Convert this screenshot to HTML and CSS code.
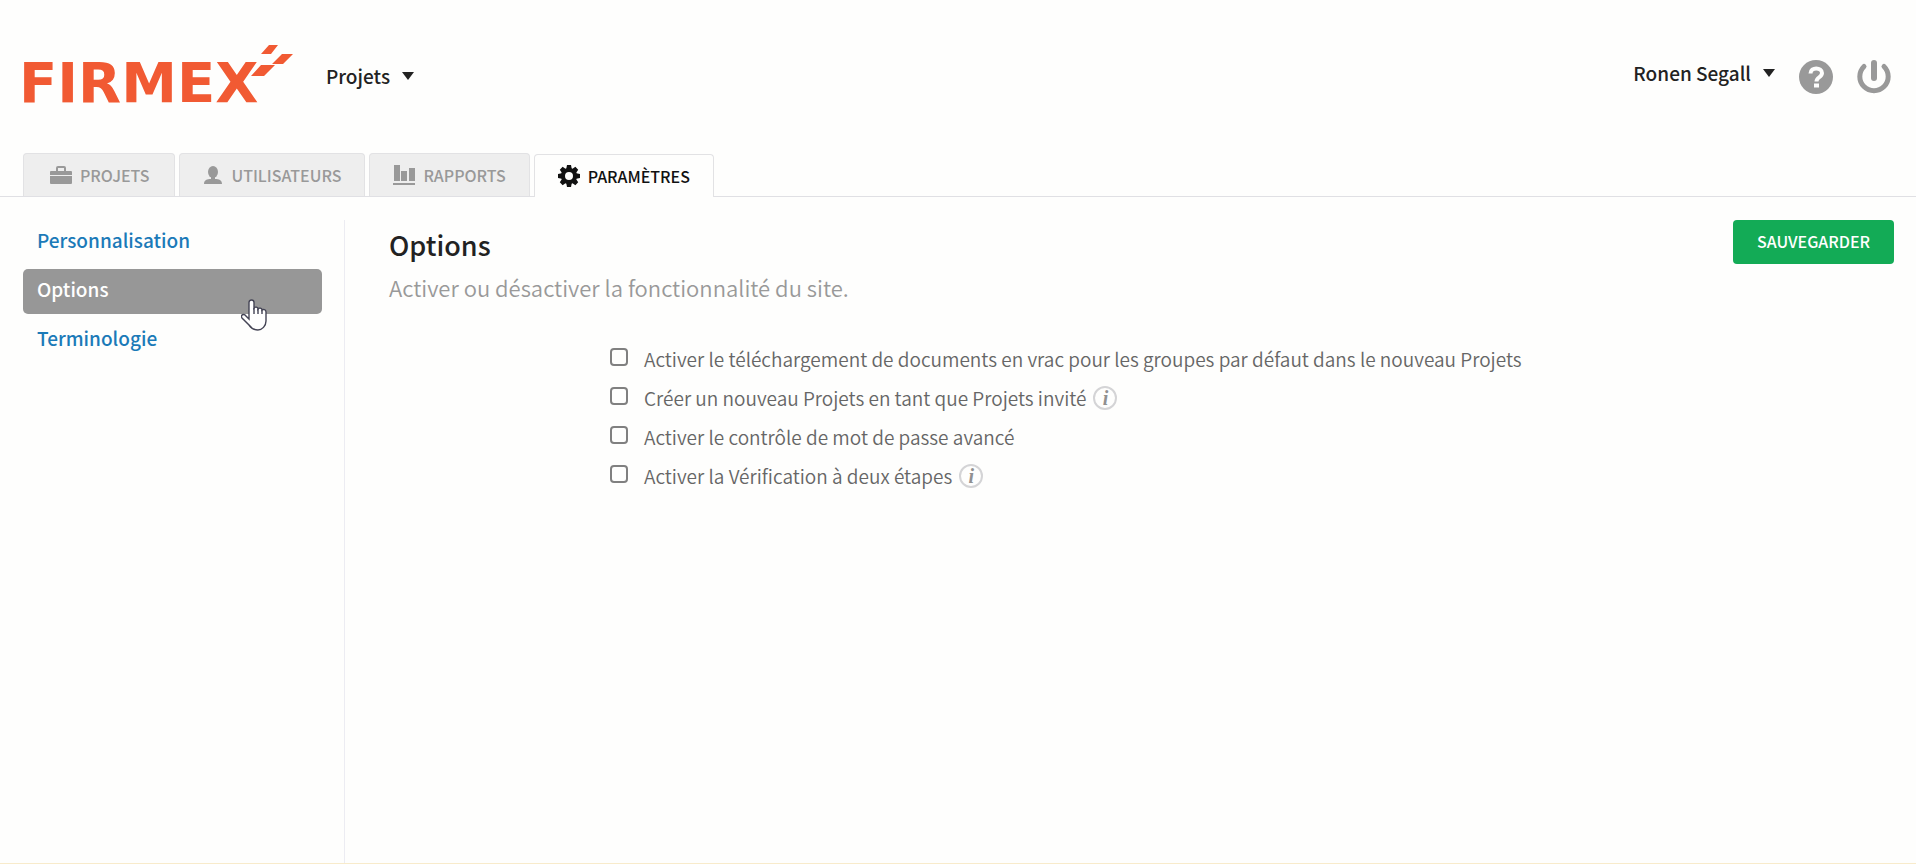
FILE: index.html
```html
<!DOCTYPE html>
<html lang="fr">
<head>
    <meta charset="UTF-8">
    <meta name="viewport" content="width=device-width, initial-scale=1.0">
    <title>Firmex - Options</title>
    <link rel="stylesheet" href="styles.css">
</head>
<body>

<header class="header">
    <a href="#" class="logo" aria-label="Firmex">
        <svg width="276" height="74" viewBox="0 0 276 74">
            <text class="logo-text" x="0" y="57">FIRMEX</text>
            <path d="M250 0h9l-7 9h-10zM263 9h11l-10 10h-11zM242 20h14l-11 11h-13z"/>
        </svg>
    </a>
    <button class="menu-button">Projets <span class="caret"></span></button>

    <div class="user-menu">
        <button class="menu-button user-name">Ronen Segall <span class="caret"></span></button>
        <a href="#" class="icon-link help" aria-label="Aide">
            <svg width="34" height="34" viewBox="0 0 34 34">
                <circle cx="17" cy="17" r="17" fill="#999"/>
                <path d="M11.500 13.500c0-7 11.500-6.500 11.500-.5 0 4.500-5.500 4-5.500 8.500" fill="none" stroke="#fefefd" stroke-width="4"/>
                <rect x="15" y="23.500" width="5" height="4" fill="#fefefd"/>
            </svg>
        </a>
        <a href="#" class="icon-link" aria-label="Déconnexion">
            <svg width="34" height="34" viewBox="0 0 34 34" fill="none" stroke="#999" stroke-width="5">
                <path d="M7 6.500a14.200 14.200 0 1 0 20 0" stroke-linecap="round"/>
                <path d="M17 3v15" stroke-width="6" stroke-linecap="round"/>
            </svg>
        </a>
    </div>
</header>

<nav class="tabs">
    <a href="#" class="tab first">
        <svg width="22" height="20" viewBox="0 0 22 20">
            <path d="M1 6h5V3q0-2 2-2h6q2 0 2 2v3h5q1 0 1 1v3H0V7q0-1 1-1zM8 6h6V3H8zM0 11h22v7q0 1-1 1H1q-1 0-1-1z" fill-rule="evenodd"/>
        </svg>
        PROJETS
    </a>
    <a href="#" class="tab">
        <svg width="20" height="20" viewBox="0 0 20 20">
            <ellipse cx="10" cy="7" rx="5" ry="6"/>
            <path d="M8 12h4v2c4 0 7 1 7 5H1c0-4 3-5 7-5z"/>
        </svg>
        UTILISATEURS
    </a>
    <a href="#" class="tab">
        <svg width="22" height="20" viewBox="0 0 22 20">
            <path d="M1 0h6v16H1zM8 6h6v10H8zM16 3h6v13h-6zM0 18h22v2H0z"/>
        </svg>
        RAPPORTS
    </a>
    <a href="#" class="tab active">
        <svg width="22" height="22" viewBox="0 0 22 22">
            <path d="M9 0h4l1 5H8zM9 22h4l1-5H8zM0 9v4l5 1V8zM22 9v4l-5 1V8z"/>
            <path d="M9 0h4l1 5H8zM9 22h4l1-5H8zM0 9v4l5 1V8zM22 9v4l-5 1V8z" transform="rotate(45 11 11)"/>
            <circle cx="11" cy="11" r="6" fill="none" stroke="#111" stroke-width="4"/>
        </svg>
        PARAMÈTRES
    </a>
</nav>

<div class="page">
    <nav class="sidebar">
        <a href="#">Personnalisation</a>
        <a href="#" class="selected">Options
            <svg class="pointer" width="26" height="32" viewBox="0 0 26 32">
                <path d="M8 20V3.500C8 .2 13 .2 13 3.500V9c1-1.500 4-1 4 1 1-1.500 4-1 4 1 1-1 4-.5 4 2V22c0 5-4 9-8 9s-7-2-9-5l-7-7c-2-3 2-5 4-2z" fill="#fff" stroke="#445" stroke-width="1.400"/>
                <path d="M13 9v6M17 10v5M21 11v4" fill="none" stroke="#445" stroke-width="1.400"/>
            </svg>
        </a>
        <a href="#">Terminologie</a>
    </nav>

    <main class="content">
        <div class="content-head">
            <div>
                <h1>Options</h1>
                <p class="subtitle">Activer ou désactiver la fonctionnalité du site.</p>
            </div>
            <button class="save-button">SAUVEGARDER</button>
        </div>

        <form class="options">
            <div class="option">
                <input type="checkbox" id="bulk-download">
                <label for="bulk-download">Activer le téléchargement de documents en vrac pour les groupes par défaut dans le nouveau Projets</label>
            </div>
            <div class="option">
                <input type="checkbox" id="guest-project">
                <label for="guest-project">Créer un nouveau Projets en tant que Projets invité</label>
                <span class="info">i</span>
            </div>
            <div class="option">
                <input type="checkbox" id="password-control">
                <label for="password-control">Activer le contrôle de mot de passe avancé</label>
            </div>
            <div class="option">
                <input type="checkbox" id="two-step">
                <label for="two-step">Activer la Vérification à deux étapes</label>
                <span class="info">i</span>
            </div>
        </form>
    </main>
</div>

</body>
</html>
```
FILE: styles.css
```css
* {
    margin: 0;
    padding: 0;
    box-sizing: border-box;
}

body {
    display: flex;
    flex-direction: column;
    min-height: 100vh;
    background-color: #fefefd;
    border-bottom: 1px solid #f8ebcb;
    font-family: "Noto Sans CJK SC", "Liberation Sans", sans-serif;
    font-size: 19px;
    line-height: 24px;
    color: #222;
}

a {
    text-decoration: none;
}

button {
    border: none;
    background: none;
    font: inherit;
    color: inherit;
    cursor: pointer;
}

svg {
    display: block;
}

/* Header */
.header {
    display: flex;
    align-items: center;
    height: 153px;
    padding: 0 25px 0 19px;
}

.logo {
    margin: 11px 31px 0 0;
}

.logo svg {
    fill: #f15a33;
}

.logo-text {
    font-family: "DejaVu Sans", sans-serif;
    font-size: 56px;
    font-weight: bold;
}

.menu-button {
    display: flex;
    align-items: center;
    gap: 12px;
    padding-bottom: 2px;
    font-weight: 500;
}

.user-name {
    padding-bottom: 8px;
}

.caret {
    border: 6px solid transparent;
    border-top: 8px solid #222;
    border-bottom: none;
}

.user-menu {
    display: flex;
    align-items: center;
    gap: 24px;
    margin-left: auto;
}

/* Tabs */
.tabs {
    display: flex;
    align-items: flex-end;
    gap: 4px;
    height: 44px;
    padding: 0 23px;
    border-bottom: 1px solid #e0e0e4;
}

.tab {
    display: flex;
    align-items: center;
    gap: 8px;
    height: 43px;
    padding: 0 23px;
    border: 1px solid #e2e2e4;
    border-bottom: none;
    border-radius: 4px 4px 0 0;
    background-color: #eee;
    color: #999;
    fill: #999;
    font-size: 16px;
    font-weight: 500;
}

.tab.first {
    padding: 0 25px 0 26px;
}

.tab.active {
    margin-bottom: -1px;
    background-color: #fefefd;
    color: #111;
    fill: #111;
}

/* Main area */
.page {
    display: flex;
    flex: 1;
    padding: 23px 22px 0 23px;
}

.sidebar {
    display: flex;
    flex-direction: column;
    gap: 4px;
    width: 322px;
    padding-right: 22px;
    border-right: 1px solid #ececf2;
}

.sidebar a {
    position: relative;
    padding: 8px 14px 13px;
    border-radius: 5px;
    color: #1b7ab8;
    font-weight: 500;
}

.sidebar .selected {
    background-color: #979797;
    color: #fff;
}

.pointer {
    position: absolute;
    top: 30px;
    right: 55px;
}

.content {
    flex: 1;
    padding-left: 44px;
}

.content-head {
    display: flex;
    align-items: flex-start;
    justify-content: space-between;
}

h1 {
    padding-top: 7px;
    font-size: 27px;
    line-height: 36px;
    font-weight: 500;
}

.subtitle {
    margin-top: 8px;
    font-size: 22px;
    line-height: 32px;
    font-weight: 350;
    color: #999;
}

.save-button {
    height: 44px;
    padding: 0 24px 2px;
    border-radius: 4px;
    background-color: #13ab56;
    color: #fff;
    font-size: 16px;
    font-weight: 500;
}

.options {
    display: flex;
    flex-direction: column;
    gap: 15px;
    margin-top: 44px;
    padding-left: 221px;
    color: #666;
    font-weight: 350;
}

.option {
    display: flex;
    align-items: center;
}

.option input {
    appearance: none;
    width: 18px;
    height: 18px;
    margin: 0 16px 4px 0;
    border: 2px solid #808080;
    border-radius: 4px;
}

.option input:checked {
    background-color: #808080;
}

.info {
    width: 24px;
    height: 24px;
    margin-left: 7px;
    border: 2px solid #d4d4d6;
    border-radius: 50%;
    color: #909090;
    font-family: "Liberation Serif", serif;
    font-size: 20px;
    font-style: italic;
    font-weight: bold;
    line-height: 20px;
    text-align: center;
}
```
